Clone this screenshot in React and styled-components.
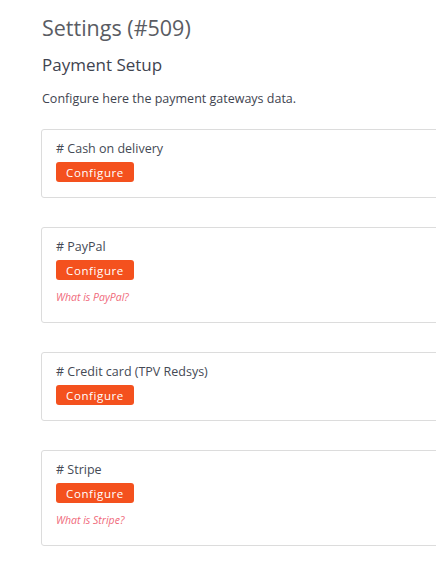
import React from "react";
import styled, { createGlobalStyle } from "styled-components";

const GlobalStyle = createGlobalStyle`
  html, body {
    margin: 0;
    padding: 0;
    background: #fff;
    overflow: hidden;
  }
  body {
    font-family: "Open Sans", "Liberation Sans", sans-serif;
    color: #4a4f5a;
  }
`;

const Page = styled.div`
  padding: 14px 0 0 41px;
  width: 436px;
  box-sizing: border-box;
`;

const Title = styled.h1`
  margin: 0 0 0 1px;
  font-size: 21.5px;
  line-height: 28px;
  font-weight: 400;
  color: #5a5c63;
`;

const Subtitle = styled.h2`
  margin: 11px 0 0 1px;
  font-size: 17px;
  line-height: 24px;
  font-weight: 400;
  color: #3f4450;
`;

const Intro = styled.p`
  margin: 13px 0 0 1px;
  font-size: 12.5px;
  line-height: 18px;
  color: #3f4450;
`;

const List = styled.div`
  display: flex;
  flex-direction: column;
  gap: 29px;
  margin-top: 21px;
`;

const Card = styled.div`
  width: 440px;
  box-sizing: border-box;
  border: 1px solid #dcdcdc;
  border-radius: 3px;
  padding: 10px 14px ${(p) => (p.$hasLink ? "19px" : "15px")};
`;

const Gateway = styled.div`
  font-size: 12.5px;
  line-height: 18px;
  color: #454a55;
`;

const ConfigureBtn = styled.button`
  display: block;
  margin-top: 4px;
  width: 78px;
  height: 20px;
  padding: 0;
  border: none;
  border-radius: 3px;
  background: #f4511e;
  color: #fff;
  font-family: "Open Sans", "Liberation Sans", sans-serif;
  font-size: 11.5px;
  font-weight: 500;
  letter-spacing: 0.6px;
  cursor: pointer;
`;

const InfoLink = styled.a`
  display: block;
  margin-top: 11px;
  font-size: 10.5px;
  line-height: 12px;
  font-style: italic;
  color: #f0697a;
  text-decoration: none;
`;

const gateways = [
  { name: "Cash on delivery" },
  { name: "PayPal", link: "What is PayPal?" },
  { name: "Credit card (TPV Redsys)" },
  { name: "Stripe", link: "What is Stripe?" },
];

export default function App() {
  return (
    <>
      <GlobalStyle />
      <Page>
        <Title>Settings (#509)</Title>
        <Subtitle>Payment Setup</Subtitle>
        <Intro>Configure here the payment gateways data.</Intro>
        <List>
          {gateways.map((g) => (
            <Card key={g.name} $hasLink={!!g.link}>
              <Gateway># {g.name}</Gateway>
              <ConfigureBtn>Configure</ConfigureBtn>
              {g.link && <InfoLink href="#">{g.link}</InfoLink>}
            </Card>
          ))}
        </List>
      </Page>
    </>
  );
}
